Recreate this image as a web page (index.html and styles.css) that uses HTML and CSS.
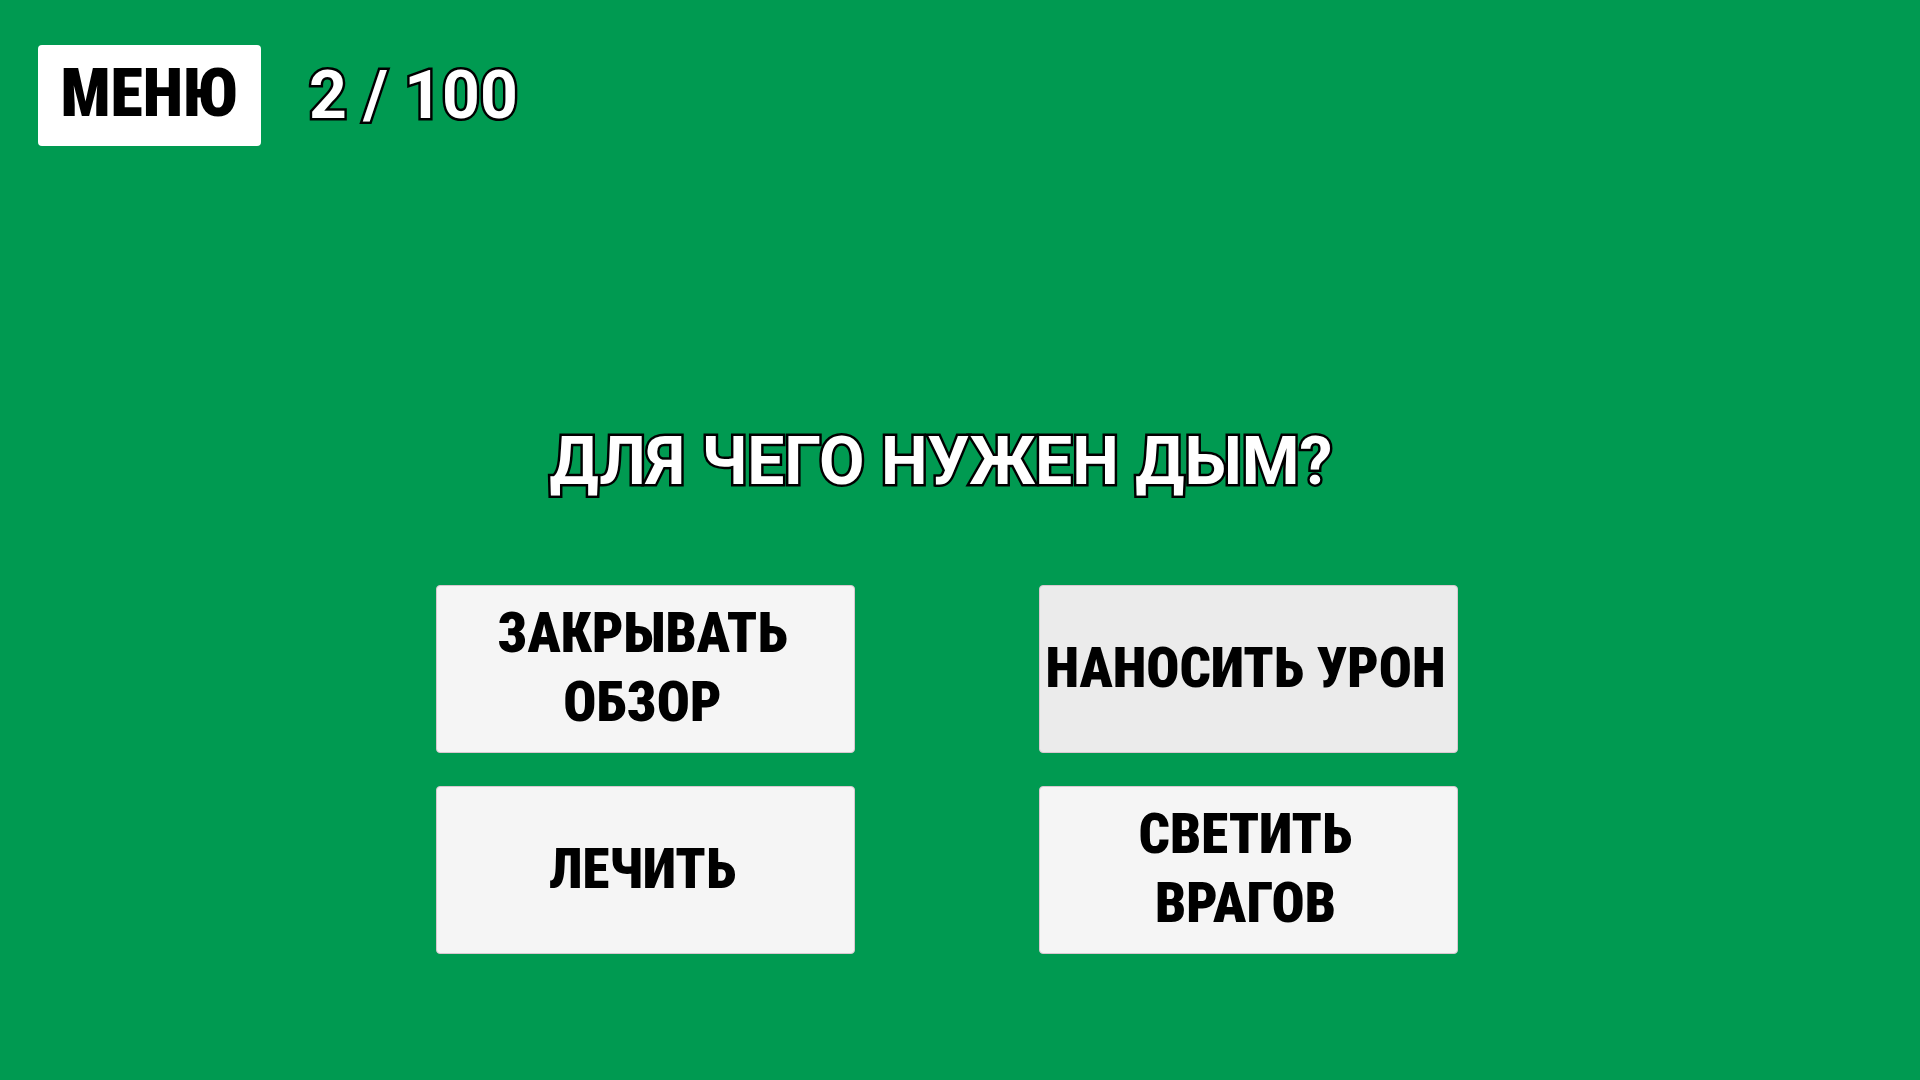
FILE: index.html
```html
<!DOCTYPE html>
<html lang="ru">
  <head>
    <meta charset="UTF-8" />
    <meta name="viewport" content="width=device-width, initial-scale=1.0" />
    <title>Викторина</title>
    <link rel="stylesheet" href="styles.css">
  </head>
  <body>
    <header class="top-bar">
      <button type="button" class="menu-button">МЕНЮ</button>
      <div class="counter">2 / 100</div>
    </header>

    <main class="quiz">
      <h1 class="question">ДЛЯ ЧЕГО НУЖЕН ДЫМ?</h1>

      <!-- Answers -->
      <div class="answers">
        <button type="button" class="answer">ЗАКРЫВАТЬ<br />ОБЗОР</button>
        <button type="button" class="answer active">НАНОСИТЬ УРОН</button>
        <button type="button" class="answer">ЛЕЧИТЬ</button>
        <button type="button" class="answer">СВЕТИТЬ<br />ВРАГОВ</button>
      </div>
    </main>
  </body>
</html>
```

FILE: styles.css
```css
* {
  box-sizing: border-box;
}

body {
  margin: 0;
  min-height: 100vh;
  background-color: #009a51;
  font-family: Roboto, "Liberation Sans", sans-serif;
  font-weight: bold;
}

button {
  font-family: "Roboto Condensed", Roboto, sans-serif;
  font-weight: 900;
  color: #000;
  border: none;
  border-radius: 4px;
  cursor: pointer;
}

.top-bar {
  display: flex;
  align-items: center;
  gap: 48px;
  padding: 45px 38px 0;
}

.menu-button {
  min-width: 223px;
  height: 101px;
  padding: 0 12px 4px;
  background: #fff;
  font-size: 66px;
  line-height: 80px;
}

.counter,
.question {
  color: #fff;
  font-size: 66px;
  line-height: 80px;
  -webkit-text-stroke: 5px #000;
  paint-order: stroke fill;
}

.quiz {
  padding: 276px 26px 80px 0;
}

.question {
  margin: 0 0 83px;
  padding-right: 12px;
  text-align: center;
}

.answers {
  display: grid;
  grid-template-columns: repeat(2, 419px);
  justify-content: center;
  gap: 33px 184px;
}

.answer {
  height: 168px;
  padding: 0 10px 2px 4px;
  background: #f5f5f5;
  border: 1px solid #d8c8d0;
  font-size: 55px;
  line-height: 69px;
}

.answer.active,
.answer:hover {
  background: #ebebeb;
}
```
